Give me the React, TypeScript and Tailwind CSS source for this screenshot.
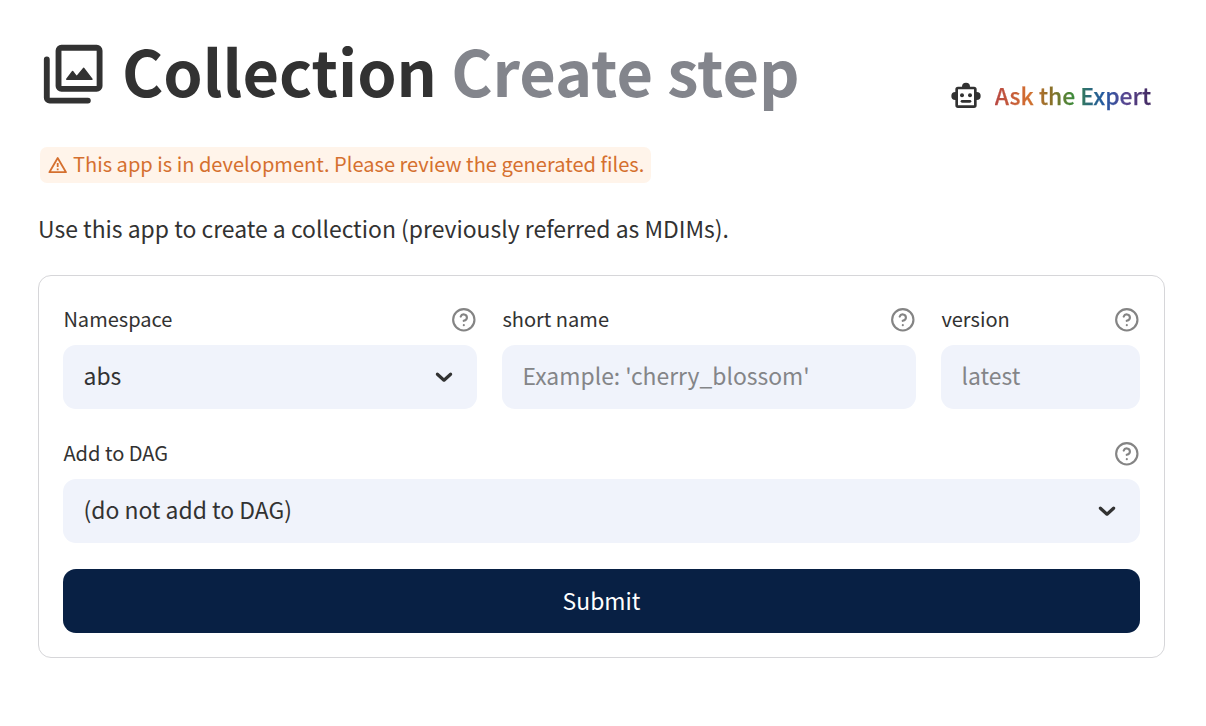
import type { ReactNode } from 'react'
import { CircleHelp } from 'lucide-react'

export default function App() {
  return (
    <main className="h-[726px] w-[1206px] overflow-hidden bg-white pl-[38px] font-['Noto_Sans_CJK_SC','Noto_Sans',sans-serif]">
      <div className="w-[1127px] text-[#323232]">
        <header className="flex h-[147px] items-start justify-between pr-[14px]">
          <h1 className="flex items-start pt-[35px] text-[63px] leading-[70px] font-bold whitespace-pre">
            <LibraryIcon />
            <span className="ml-[13.6px]">Collection </span>
            <span className="text-[#83858c]">Create step</span>
          </h1>
          <a href="#" className="mt-[78px] flex items-center gap-[13px] text-[22.9px] leading-8 font-medium whitespace-nowrap">
            <RobotIcon />
            <span className="bg-[linear-gradient(to_right,#b84843,#d4702f_22%,#8a7028_36%,#3d8a3a_50%,#2c6c78_60%,#2258a4_70%,#5a4590_84%,#41285f)] bg-clip-text text-transparent [-webkit-text-stroke:0.25px_transparent]">
              Ask the Expert
            </span>
          </a>
        </header>

        <p className="ml-[2px] flex h-9 w-[611px] items-center rounded-[7px] bg-[#fff4ea] pl-[7.6px] text-[20.07px] whitespace-nowrap text-[#d5702f]">
          <WarningIcon />
          <span className="ml-[5.4px] pb-[2px]">This app is in development. Please review the generated files.</span>
        </p>

        <p className="mt-[25px] h-10 text-[22.93px] leading-10 whitespace-nowrap">
          Use this app to create a collection (previously referred as MDIMs).
        </p>

        <form
          className="mt-[27px] h-[383px] rounded-[13px] border border-[#d6d6d9] px-6 pt-[29px]"
          onSubmit={(e) => e.preventDefault()}
        >
          <div className="grid grid-cols-[414px_414px_199px] gap-[25px]">
            <Field label="Namespace">
              <SelectBox value="abs" />
            </Field>
            <Field label="short name">
              <TextBox placeholder="Example: 'cherry_blossom'" />
            </Field>
            <Field label="version">
              <TextBox placeholder="latest" />
            </Field>
          </div>
          <div className="mt-[30px]">
            <Field label="Add to DAG">
              <SelectBox value="(do not add to DAG)" />
            </Field>
          </div>
          <button
            type="submit"
            className="mt-[26px] h-16 w-full rounded-[13px] bg-[#082044] pb-[2px] text-[22.9px] leading-[62px] text-white"
          >
            Submit
          </button>
        </form>
      </div>
    </main>
  )
}

function Field({ label, children }: { label: string; children: ReactNode }) {
  return (
    <div>
      <div className="mb-[10px] flex h-[30px] items-center justify-between text-[20.05px] leading-[28px]">
        <span className="pb-[2px] pl-[0.4px]">{label}</span>
        <CircleHelp size={25.6} strokeWidth={2} className="text-[#848484]" />
      </div>
      {children}
    </div>
  )
}

function SelectBox({ value }: { value: string }) {
  return (
    <div className="flex h-16 items-center justify-between rounded-[13px] bg-[#f0f3fb] pr-[24.4px] pl-[20.5px] text-[22.9px]">
      <span className="pb-[3px]">{value}</span>
      <svg width="18" height="12" viewBox="0 0 18 12" fill="none" stroke="currentColor" strokeWidth="3.2">
        <path d="M2.4 3.2 9 9.2l6.6-6" strokeLinecap="round" strokeLinejoin="round" />
      </svg>
    </div>
  )
}

function TextBox({ placeholder }: { placeholder: string }) {
  return (
    <input
      type="text"
      placeholder={placeholder}
      className="block h-16 w-full rounded-[13px] bg-[#f0f3fb] px-[20.5px] pb-[5px] text-[22.9px] placeholder:text-[#848588]"
    />
  )
}

function LibraryIcon() {
  return (
    <svg width="70.4" height="70.4" viewBox="0 0 24 24" fill="none" stroke="currentColor" strokeWidth="2" className="mt-[3.5px] shrink-0">
      <rect x="7" y="3" width="14" height="14" rx="1" />
      <path d="M3 7v13a1 1 0 0 0 1 1h13" strokeLinecap="round" />
      <path
        d="M9.8 13.7h8.6l-2.8-3.7-2.4 2.9-1.4-1.8z"
        fill="currentColor"
        strokeWidth=".5"
        strokeLinejoin="round"
      />
    </svg>
  )
}

function RobotIcon() {
  return (
    <svg width="32" height="32" viewBox="0 0 24 24" fill="currentColor" className="mt-[2px] shrink-0">
      <path
        d="M4 15a3 3 0 0 1 0-6V7a2 2 0 0 1 2-2h3a3 3 0 0 1 6 0h3a2 2 0 0 1 2 2v2a3 3 0 0 1 0 6v4a2 2 0 0 1-2 2H6a2 2 0 0 1-2-2zM6 7v12h12V7z"
        fillRule="evenodd"
      />
      <circle cx="9" cy="11.5" r="1.5" />
      <circle cx="15" cy="11.5" r="1.5" />
      <rect x="8" y="15" width="8" height="2" rx="1" />
    </svg>
  )
}

function WarningIcon() {
  return (
    <svg width="20" height="18" viewBox="0 0 20 18" fill="none" stroke="currentColor" strokeWidth="1.8" className="shrink-0">
      <path d="M1.4 16.2 9.7 2l8.3 14.2z" strokeLinejoin="round" />
      <path d="M9.7 7.1v4M9.7 12.5v1.8" />
    </svg>
  )
}
